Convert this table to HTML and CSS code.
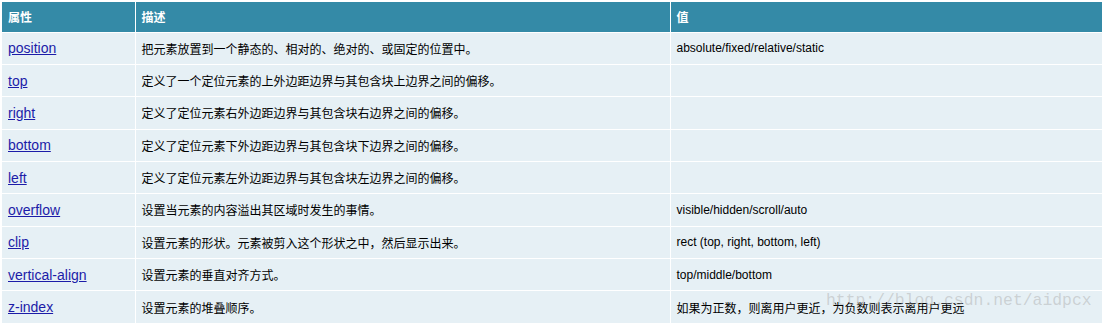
FILE: index.html
```html
<!DOCTYPE html>
<html lang="zh">
<head>
<meta charset="utf-8">
<link rel="stylesheet" href="styles.css">
</head>
<body>
<div class="wrap">
<table class="props">
<colgroup><col class="c1"><col class="c2"><col class="c3"></colgroup>
<thead>
<tr><th>属性</th><th>描述</th><th>值</th></tr>
</thead>
<tbody>
<tr><td><a href="#">position</a></td><td>把元素放置到一个静态的、相对的、绝对的、或固定的位置中。</td><td>absolute/fixed/relative/static</td></tr>
<tr><td><a href="#">top</a></td><td>定义了一个定位元素的上外边距边界与其包含块上边界之间的偏移。</td><td></td></tr>
<tr><td><a href="#">right</a></td><td>定义了定位元素右外边距边界与其包含块右边界之间的偏移。</td><td></td></tr>
<tr><td><a href="#">bottom</a></td><td>定义了定位元素下外边距边界与其包含块下边界之间的偏移。</td><td></td></tr>
<tr><td><a href="#">left</a></td><td>定义了定位元素左外边距边界与其包含块左边界之间的偏移。</td><td></td></tr>
<tr><td><a href="#">overflow</a></td><td>设置当元素的内容溢出其区域时发生的事情。</td><td>visible/hidden/scroll/auto</td></tr>
<tr><td><a href="#">clip</a></td><td>设置元素的形状。元素被剪入这个形状之中，然后显示出来。</td><td>rect (top, right, bottom, left)</td></tr>
<tr><td><a href="#">vertical-align</a></td><td>设置元素的垂直对齐方式。</td><td>top/middle/bottom</td></tr>
<tr><td><a href="#">z-index</a></td><td>设置元素的堆叠顺序。</td><td>如果为正数，则离用户更近，为负数则表示离用户更远</td></tr>
</tbody>
</table>
<div class="watermark">http://blog.csdn.net/aidpcx</div>
</div>
</body>
</html>
```
FILE: styles.css
```css
html, body {
  margin: 0;
  padding: 0;
  background: #ffffff;
}
.wrap {
  position: relative;
  padding: 2px 0 0 2px;
}
.props {
  border-collapse: collapse;
  table-layout: fixed;
  width: 1100px;
  font-family: Arial, "Liberation Sans", "Noto Sans CJK SC", sans-serif;
  font-size: 12px;
  color: #000;
}
.c1 { width: 133px; }
.c2 { width: 535px; }
.c3 { width: 432px; }
.props th {
  background: #348aa7;
  color: #ffffff;
  font-weight: bold;
  text-align: left;
  height: 30px;
  padding: 0 6px;
  border: 1px solid #ffffff;
  border-top: none;
  box-sizing: border-box;
}
.props th:first-child, .props td:first-child { border-left: none; }
.props th:last-child, .props td:last-child { border-right: none; }
.props td {
  background: #e6f0f5;
  height: 32.35px;
  padding: 0 6px;
  border: 1px solid #ffffff;
  box-sizing: border-box;
  white-space: nowrap;
  overflow: hidden;
}
.props tbody tr:last-child td { border-bottom: none; }
.props td a {
  color: #1c1ca8;
  font-size: 14px;
  text-decoration: underline;
}
.watermark {
  position: absolute;
  left: 826px;
  top: 291px;
  font-family: "Liberation Mono", "DejaVu Sans Mono", monospace;
  font-size: 16.4px;
  color: rgba(170, 170, 170, 0.45);
  white-space: nowrap;
  pointer-events: none;
}
```
